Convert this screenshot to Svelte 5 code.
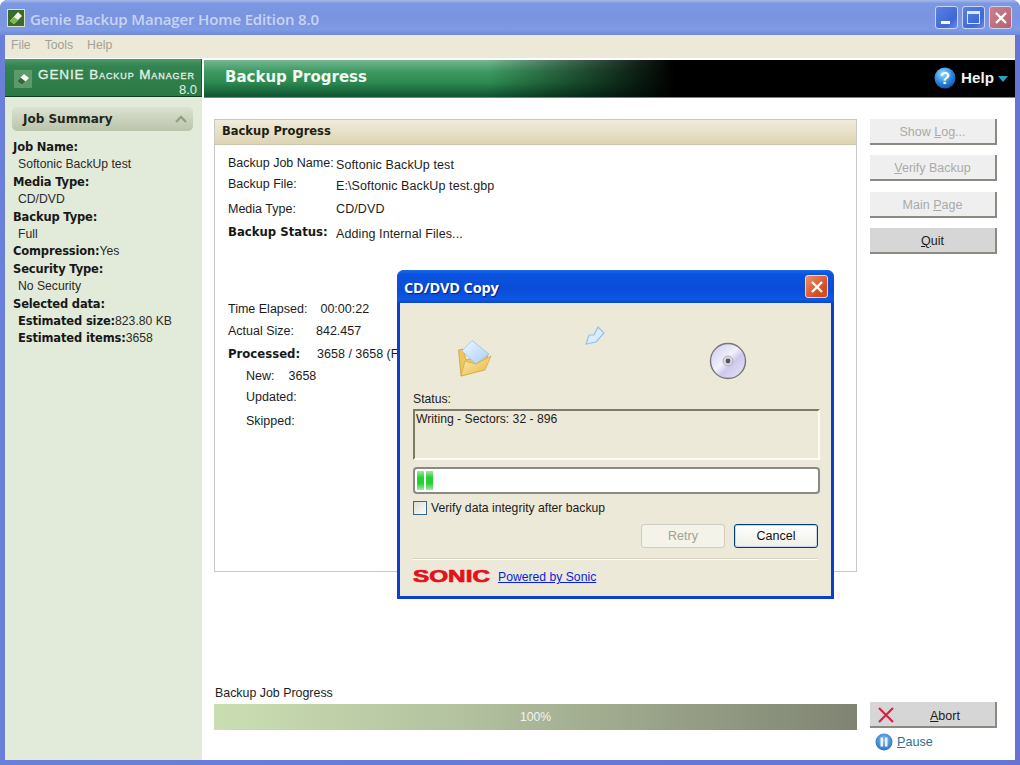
<script>
  const summary = [
    { kind: 'h', text: 'Job Name:' },
    { kind: 'v', text: 'Softonic BackUp test' },
    { kind: 'h', text: 'Media Type:' },
    { kind: 'v', text: 'CD/DVD' },
    { kind: 'h', text: 'Backup Type:' },
    { kind: 'v', text: 'Full' },
    { kind: 'h', text: 'Compression:', value: 'Yes' },
    { kind: 'h', text: 'Security Type:' },
    { kind: 'v', text: 'No Security' },
    { kind: 'h', text: 'Selected data:' },
    { kind: 'e', text: 'Estimated size:', value: '823.80 KB' },
    { kind: 'e', text: 'Estimated items:', value: '3658' }
  ];
</script>

<div class="window">
  <header class="titlebar">
    <svg class="appicon" viewBox="0 0 18 18" width="18" height="18">
      <rect x="0.5" y="0.5" width="17" height="17" fill="#3a6a30" stroke="#d8e0c8" />
      <path d="M3 12 L11 3 L15 7 L7 15 Z" fill="#eef4e0" />
      <path d="M3 12 L7 8 L11 11 L7 15 Z" fill="#7fb84e" />
    </svg>
    <span class="apptitle">Genie Backup Manager Home Edition 8.0</span>
    <div class="winbtns">
      <span class="wb"><i class="min"></i></span>
      <span class="wb"><i class="max"></i></span>
      <span class="wb close">
        <svg viewBox="0 0 14 14" width="14" height="14"><path d="M2 2 L12 12 M12 2 L2 12" stroke="#fff" stroke-width="2.4" /></svg>
      </span>
    </div>
  </header>

  <nav class="menu"><span>File</span><span>Tools</span><span>Help</span></nav>

  <div class="body">
    <aside class="side">
      <div class="brand">
        <svg class="brandicon" viewBox="0 0 18 18" width="18" height="18">
          <rect width="18" height="18" fill="#5c9a6c" />
          <path d="M3 11 L10 4 L15 8 L8 15 Z" fill="#f4f8ee" />
          <path d="M3 11 L6.5 7.5 L11.5 11.5 L8 15 Z" fill="#2f6a3f" />
        </svg>
        <div class="brandtext">
          <div class="brandname">GENIE Backup Manager</div>
          <div class="brandver">8.0</div>
        </div>
      </div>
      <div class="sumhead">
        <span>Job Summary</span>
        <svg viewBox="0 0 12 8" width="12" height="8"><path d="M1 7 L6 2 L11 7" fill="none" stroke="#8fa083" stroke-width="2.4" /></svg>
      </div>
      <div class="sumlist">
        {#each summary as row}
          <div class="row {row.kind}">
            {#if row.kind === 'v'}{row.text}{:else}<b>{row.text}</b>{row.value ?? ''}{/if}
          </div>
        {/each}
      </div>
    </aside>

    <main class="main">
      <div class="banner">
        <h1>Backup Progress</h1>
        <div class="help">
          <svg viewBox="0 0 22 22" width="22" height="22">
            <defs>
              <radialGradient id="hg" cx="0.4" cy="0.3" r="0.8">
                <stop offset="0" stop-color="#9fdcff" />
                <stop offset="0.55" stop-color="#2a86dc" />
                <stop offset="1" stop-color="#0e4aa8" />
              </radialGradient>
            </defs>
            <circle cx="11" cy="11" r="10.5" fill="url(#hg)" />
            <text x="11" y="17" text-anchor="middle" class="q">?</text>
          </svg>
          <span>Help</span>
          <i class="caret"></i>
        </div>
      </div>

      <div class="content">
        <div class="leftcol">
          <section class="panel">
            <div class="panelhead">Backup Progress</div>
            <div class="info">
              <div class="line l1"><span class="k">Backup Job Name:</span><span class="val low">Softonic BackUp test</span></div>
              <div class="line l2"><span class="k">Backup File:</span><span class="val low">E:\Softonic BackUp test.gbp</span></div>
              <div class="line l3"><span class="k">Media Type:</span><span class="val">CD/DVD</span></div>
              <div class="line l4"><b class="k bold">Backup Status:</b><span class="val low">Adding Internal Files...</span></div>

              <div class="stat s1">Time Elapsed:<span class="g1">00:00:22</span></div>
              <div class="stat s2">Actual Size:<span class="g2">842.457</span></div>
              <div class="stat s3"><b>Processed:</b><span class="g3">3658 / 3658 (Files)</span></div>
              <div class="stat sub s4">New:<span class="g4">3658</span></div>
              <div class="stat sub s5">Updated:</div>
              <div class="stat sub s6">Skipped:</div>
            </div>
          </section>

          <div class="jobprog">
            <div class="joblabel">Backup Job Progress</div>
            <div class="jobbar">100%</div>
          </div>
        </div>

        <div class="rightcol">
          <div class="btnstack">
            <button class="cmd off">Show <u>L</u>og...</button>
            <button class="cmd off"><u>V</u>erify Backup</button>
            <button class="cmd off third">Main <u>P</u>age</button>
            <button class="cmd on"><u>Q</u>uit</button>
          </div>
          <div class="endstack">
            <button class="cmd on abort">
              <svg viewBox="0 0 16 16" width="16" height="16"><path d="M1 1 L15 15 M15 1 L1 15" stroke="#d8204a" stroke-width="2.2" /></svg>
              <span><u>A</u>bort</span>
            </button>
            <div class="pause">
              <svg viewBox="0 0 18 18" width="18" height="18">
                <defs>
                  <radialGradient id="pg" cx="0.5" cy="0.4" r="0.7">
                    <stop offset="0" stop-color="#8fc8f4" />
                    <stop offset="1" stop-color="#165fb4" />
                  </radialGradient>
                </defs>
                <circle cx="9" cy="9" r="8.5" fill="url(#pg)" />
                <rect x="5.5" y="4.5" width="2.5" height="9" fill="#e8f4ff" />
                <rect x="10" y="4.5" width="2.5" height="9" fill="#e8f4ff" />
              </svg>
              <span><u>P</u>ause</span>
            </div>
          </div>
        </div>
      </div>
    </main>
  </div>

  <div class="dialog">
    <div class="dlgtitle">
      <span>CD/DVD Copy</span>
      <span class="dlgclose">
        <svg viewBox="0 0 14 14" width="14" height="14"><path d="M2 2 L12 12 M12 2 L2 12" stroke="#fff" stroke-width="2.4" /></svg>
      </span>
    </div>
    <div class="dlgbody">
      <div class="anim">
        <svg class="folder" viewBox="0 0 34 37" width="34" height="37">
          <defs>
            <linearGradient id="fy" x1="0" y1="0" x2="1" y2="1">
              <stop offset="0" stop-color="#fdf0b4" />
              <stop offset="1" stop-color="#e6b440" />
            </linearGradient>
            <linearGradient id="fp" x1="0" y1="0" x2="1" y2="1">
              <stop offset="0" stop-color="#f0f7ff" />
              <stop offset="1" stop-color="#a8cef4" />
            </linearGradient>
          </defs>
          <path d="M0.5 10 L5 9 L8 20 L30 14 L27 29 L3 36 Z" fill="#eec65c" stroke="#c9a23c" stroke-width="0.8" />
          <path d="M4 11 L14 0.5 L31 14 L18 24 Z" fill="url(#fp)" stroke="#9cc0e6" stroke-width="0.8" />
          <path d="M3 36 L7 21 L18 24 L33 16 L27 30 Z" fill="url(#fy)" stroke="#d0aa48" stroke-width="0.8" />
        </svg>
        <svg class="flying" viewBox="0 0 20 20" width="20" height="20">
          <path d="M1 18 L4 9 L9 9 L13 1 L19 7 L11 16 Z" fill="#dcecfc" stroke="#8cc4f0" stroke-width="1.2" />
        </svg>
        <svg class="disc" viewBox="0 0 38 38" width="38" height="38">
          <defs>
            <linearGradient id="cd" x1="0" y1="0" x2="1" y2="1">
              <stop offset="0" stop-color="#c8c8ee" />
              <stop offset="0.45" stop-color="#f2f0fa" />
              <stop offset="0.6" stop-color="#cfc8ee" />
              <stop offset="1" stop-color="#e8e6f6" />
            </linearGradient>
          </defs>
          <circle cx="19" cy="19" r="17.5" fill="url(#cd)" stroke="#77777a" stroke-width="1.4" />
          <circle cx="19" cy="19" r="5" fill="#d8d8e2" stroke="#b0b0b8" />
          <circle cx="19" cy="19" r="2.4" fill="#55555c" />
        </svg>
      </div>
      <div class="statlabel">Status:</div>
      <div class="statusbox">Writing - Sectors: 32 - 896</div>
      <div class="dlgprog"><i></i><i></i></div>
      <label class="verify"><span class="chk"></span>Verify data integrity after backup</label>
      <div class="dlgbtns">
        <button class="xp disabled">Retry</button>
        <button class="xp default">Cancel</button>
      </div>
      <div class="sep"></div>
      <div class="brandrow">
        <span class="sonic">SONIC</span>
        <a href="#sonic" class="plink">Powered by Sonic</a>
      </div>
    </div>
  </div>
</div>

<style>
  :global(body) { margin: 0; background: #fff; }
  * { box-sizing: border-box; }

  .window {
    position: relative;
    width: 1020px;
    height: 765px;
    display: flex;
    flex-direction: column;
    font-family: "Liberation Sans", Arial, sans-serif;
    font-size: 12.2px;
    color: #1c1c1c;
    background: linear-gradient(90deg, #6a7fda 0, #6674d6 100%);
    border-radius: 8px 8px 0 0;
    padding: 0 5px 5px;
    overflow: hidden;
  }

  .titlebar {
    height: 35px;
    margin: 0 -5px;
    padding: 0 8px 0 7px;
    display: flex;
    align-items: center;
    flex: none;
    background: linear-gradient(180deg, #a6b8ec 0, #7c98e2 10%, #7a94e0 50%, #7f9ae4 85%, #6f88d8 100%);
  }
  .appicon { margin-right: 5px; flex: none; }
  .apptitle {
    font-family: "Open Sans", sans-serif;
    font-weight: 600;
    font-size: 15px;
    letter-spacing: -0.15px;
    color: #c7d4f4;
    position: relative;
    top: 1px;
  }
  .winbtns { margin-left: auto; display: flex; gap: 4px; }
  .wb {
    width: 23px;
    height: 23px;
    border: 1px solid #c8d4f4;
    border-radius: 3px;
    background: linear-gradient(135deg, #5a82e4, #3d67d6 70%, #6a8ee8);
    position: relative;
    display: flex;
    align-items: center;
    justify-content: center;
  }
  .wb.close { background: linear-gradient(135deg, #c98090, #b8606e); }
  .min { position: absolute; left: 5px; bottom: 4px; width: 9px; height: 3px; background: #fff; }
  .max { display: block; width: 13px; height: 13px; border: 1px solid #dfe8fb; border-top-width: 3px; }

  .menu {
    height: 24px;
    flex: none;
    background: #ece9d8;
    color: #a3a195;
    display: flex;
    align-items: center;
    padding: 0 0 4px 6px;
    gap: 14px;
    border-bottom: 1px solid #fff;
  }

  .body { flex: 1; display: flex; min-height: 0; background: #fff; }

  .side { width: 197px; flex: none; background: #e2ebda; }
  .brand {
    height: 38px;
    background: linear-gradient(180deg, #4b9a68 0, #338350 20%, #2b7a45 100%);
    border-bottom: 1px solid #0e3a1e;
    border-right: 1px solid #1e5a34;
    display: flex;
    padding: 4px 4px 0 9px;
    color: #e4efe6;
  }
  .brandicon { margin: 7px 6px 0 0; flex: none; }
  .brandtext { flex: 1; }
  .brandname {
    font-size: 13.5px;
    font-variant: small-caps;
    letter-spacing: 0.9px;
    white-space: nowrap;
    margin-top: 5px;
    line-height: 14px;
    -webkit-text-stroke: 0.3px #e4efe6;
  }
  .brandver { text-align: right; font-size: 13px; line-height: 13px; margin-top: 1px; }

  .sumhead {
    margin: 10px 9px 0 7px;
    height: 24px;
    border-radius: 5px;
    background: linear-gradient(180deg, #dbe2d0 0, #bac3ab 100%);
    display: flex;
    align-items: center;
    justify-content: space-between;
    padding: 0 6px 0 11px;
    font-family: "DejaVu Sans", sans-serif;
    font-weight: 700;
    font-size: 12px;
    color: #22261c;
  }
  .sumlist { padding: 8px 0 0 8px; }
  .row { height: 17.4px; line-height: 17.4px; white-space: nowrap; font-size: 12.2px; color: #2a2a2a; }
  .row b { font-family: "DejaVu Sans", sans-serif; font-size: 11.5px; font-weight: 700; color: #181818; letter-spacing: -0.15px; }
  .row.v, .row.e { padding-left: 5px; }

  .main { flex: 1; min-width: 0; display: flex; flex-direction: column; padding-left: 2px; }
  .banner {
    height: 38px;
    margin-top: 1px;
    flex: none;
    display: flex;
    align-items: center;
    justify-content: space-between;
    padding: 0 7px 2px 21px;
    background:
      linear-gradient(90deg, rgba(0,0,0,0) 0, rgba(0,0,0,0) 35%, rgba(0,0,0,0.6) 49%, #000 58%, #000 100%),
      linear-gradient(180deg, #74b892 0, #3f9a62 30%, #2e8a52 60%, #1a683c 85%, #0f5230 100%);
    border-bottom: 1px solid #6a8c74;
  }
  h1 {
    margin: 0 0 2px;
    font-family: "DejaVu Sans", sans-serif;
    font-size: 15px;
    font-weight: 700;
    letter-spacing: 0;
    color: #f0f8f2;
  }
  .help { display: flex; align-items: center; gap: 5px; color: #f2f2f2; font-size: 15.2px; font-weight: 700; }
  .q { font: 700 17px "Liberation Sans", sans-serif; fill: #fff; }
  .caret { width: 0; height: 0; border: 5px solid transparent; border-top: 6px solid #2aa0c8; border-bottom: 0; margin-left: -1px; margin-top: 2px; }

  .content { flex: 1; min-height: 0; display: flex; padding: 21px 18px 0 10px; }
  .leftcol { width: 643px; flex: none; display: flex; flex-direction: column; }
  .panel { height: 453px; border: 1px solid #c8c8c8; flex: none; font-size: 12.5px; }
  .panelhead {
    height: 25px;
    line-height: 23px;
    padding-left: 7px;
    background: linear-gradient(180deg, #f0ecdc 0, #dcd4b2 100%);
    border-bottom: 1px solid #c9c5b0;
    font-family: "DejaVu Sans", sans-serif;
    font-size: 11.5px;
    font-weight: 700;
    color: #1e1e14;
  }
  .info { padding-left: 13px; padding-top: 11px; }
  .line { display: flex; height: 14px; line-height: 14px; white-space: nowrap; }
  .k { width: 108px; flex: none; }
  .val { letter-spacing: 0.1px; }
  .bold, .stat b { font-family: "DejaVu Sans", sans-serif; font-size: 11.7px; font-weight: 700; color: #181818; }
  .val.low { position: relative; top: 2px; }
  .l2 { margin-top: 7px; }
  .l3 { margin-top: 11px; }
  .l4 { margin-top: 9px; }
  .stat { height: 14px; line-height: 14px; white-space: nowrap; }
  .s1 { margin-top: 63px; }
  .s2 { margin-top: 8px; }
  .s3 { margin-top: 9px; }
  .s4 { margin-top: 8px; }
  .s5 { margin-top: 7px; }
  .s6 { margin-top: 10px; }
  .sub { padding-left: 18px; }
  .g1 { margin-left: 13px; }
  .g2 { margin-left: 22px; }
  .g3 { margin-left: 17px; }
  .g4 { margin-left: 14px; }

  .jobprog { margin-top: auto; padding-bottom: 30px; }
  .joblabel { height: 14px; line-height: 14px; margin-bottom: 4px; font-size: 12.4px; padding-left: 1px; }
  .jobbar {
    height: 26px;
    line-height: 26px;
    text-align: center;
    color: #f4f4f4;
    background: linear-gradient(90deg, #cbdeb2 0, #b2c09e 40%, #7f8472 100%);
  }

  .rightcol { flex: 1; padding-left: 13px; display: flex; flex-direction: column; justify-content: space-between; }
  .btnstack { display: flex; flex-direction: column; gap: 10px; }
  .third { margin-top: 1px; }
  .cmd {
    width: 127px;
    height: 26px;
    font: 12.5px "Liberation Sans", Arial, sans-serif;
    border: 0 solid #8a8a82;
    border-right-width: 2px;
    border-bottom-width: 2px;
    padding: 2px 0 0;
  }
  .cmd.off { background: #efefef; color: #aaaaaa; }
  .cmd.on { background: #d6d6d6; color: #1c1c1c; }
  .endstack { padding-bottom: 9px; }
  .abort { display: flex; align-items: center; padding: 1px 0 0 8px; }
  .abort span { margin-left: 36px; padding-top: 2px; }
  .pause { display: flex; align-items: center; gap: 4px; padding: 5px 0 0 5px; color: #2f7090; font-size: 12.6px; }

  .dialog {
    position: absolute;
    left: 397px;
    top: 270px;
    width: 437px;
    height: 329px;
    background: #0b3fd0;
    border-radius: 7px 7px 0 0;
    padding: 0 3px 3px;
    display: flex;
    flex-direction: column;
  }
  .dlgtitle {
    height: 33px;
    margin: 0 -3px;
    padding: 1px 6px 0 7px;
    display: flex;
    align-items: center;
    justify-content: space-between;
    background: linear-gradient(180deg, #1a6ae8 0, #0a54e0 12%, #0a4cd8 60%, #0c58e4 90%, #0a46c8 100%);
    border-radius: 7px 7px 0 0;
    color: #fff;
    font-family: "Open Sans", sans-serif;
    font-size: 14.5px;
    font-weight: 700;
    letter-spacing: -0.15px;
    text-shadow: 1px 1px 1px #02208c;
  }
  .dlgclose {
    width: 23px;
    height: 23px;
    margin-top: -1px;
    border: 1px solid #f4d8cc;
    border-radius: 3px;
    background: linear-gradient(135deg, #ee9068, #d84a20 70%);
    display: flex;
    align-items: center;
    justify-content: center;
  }
  .dlgbody { flex: 1; background: #ece9d8; padding: 0 13px; display: flex; flex-direction: column; }
  .anim { height: 86px; position: relative; flex: none; }
  .folder { position: absolute; left: 45px; top: 37px; }
  .flying { position: absolute; left: 172px; top: 23px; }
  .disc { position: absolute; left: 296px; top: 39px; }
  .statlabel { height: 14px; line-height: 14px; margin-top: 3px; }
  .statusbox {
    width: 407px;
    height: 51px;
    margin-top: 3px;
    border: 2px solid;
    border-color: #7c7a6c #fbfaf4 #fbfaf4 #7c7a6c;
    padding: 1px 0 0 1px;
    line-height: 14px;
  }
  .dlgprog {
    width: 407px;
    height: 27px;
    margin-top: 7px;
    background: #fff;
    border: 2px solid #8a8a84;
    border-radius: 4px;
    padding: 2px;
    display: flex;
    gap: 2px;
  }
  .dlgprog i { width: 7px; background: linear-gradient(180deg, #9eeaa4, #26d032 35%, #28cf34 65%, #9eeaa4); }
  .verify { display: flex; align-items: center; gap: 4px; margin-top: 7px; height: 14px; }
  .chk { width: 14px; height: 14px; border: 1px solid #3a6488; background: linear-gradient(135deg, #dcdcd6, #fbfbf8); flex: none; }
  .dlgbtns { display: flex; justify-content: flex-end; gap: 9px; margin-top: 9px; width: 405px; }
  .xp {
    width: 84px;
    height: 24px;
    font: 12.5px "Liberation Sans", Arial, sans-serif;
    border-radius: 3px;
    padding: 0;
  }
  .xp.disabled { background: #f4f3ea; color: #a1a192; border: 1px solid #cfcdbd; }
  .xp.default { background: linear-gradient(180deg, #fff, #f0efe6); color: #111; border: 1px solid #003c74; box-shadow: inset 0 0 0 1px #c4d6ef; }
  .sep { margin-top: 10px; width: 405px; height: 2px; background: #d6d2bf; border-bottom: 1px solid #fff; flex: none; }
  .brandrow { display: flex; align-items: center; margin-top: 8px; height: 18px; }
  .sonic {
    display: inline-block;
    width: 85px;
    font: 900 17px/18px "Liberation Sans", sans-serif;
    color: #e5101c;
    -webkit-text-stroke: 0.7px #e5101c;
    transform: scaleX(1.43);
    transform-origin: left center;
  }
  .plink { color: #0a1ee0; text-decoration: underline; }
</style>
